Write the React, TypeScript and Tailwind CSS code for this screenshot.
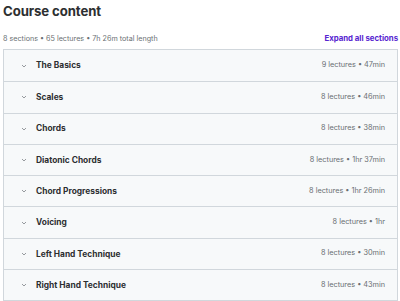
import React from 'react';

const sections = [
  { title: 'The Basics', meta: '9 lectures • 47min' },
  { title: 'Scales', meta: '8 lectures • 46min' },
  { title: 'Chords', meta: '8 lectures • 38min' },
  { title: 'Diatonic Chords', meta: '8 lectures • 1hr 37min' },
  { title: 'Chord Progressions', meta: '8 lectures • 1hr 26min' },
  { title: 'Voicing', meta: '8 lectures • 1hr' },
  { title: 'Left Hand Technique', meta: '8 lectures • 30min' },
  { title: 'Right Hand Technique', meta: '8 lectures • 43min' },
];

function Chevron() {
  return (
    <svg width="6" height="4" viewBox="0 0 6 4" className="shrink-0">
      <path d="M1 1l2 2 2-2" fill="none" stroke="#8a8f93" strokeWidth="0.9" />
    </svg>
  );
}

export default function App() {
  return (
    <div className="w-[400px] h-[301px] overflow-hidden bg-white font-['Inter',sans-serif] text-[#2d2f31]">
      <div className="pl-[3px] pr-[2px]">
        <h2 className="font-bold text-[13.2px] leading-[20px] pt-[1px] tracking-[-0.1px]">Course content</h2>

        <div className="flex items-center justify-between mt-[10px] h-[16px]">
          <span className="text-[7.2px] text-[#6a6f73]">8 sections • 65 lectures • 7h 26m total length</span>
          <span className="text-[7.8px] font-bold text-[#5624d0]">Expand all sections</span>
        </div>

        {/* Sections */}
        <div className="mt-[2px] border border-[#d1d7dc] bg-[#f7f9fa]">
          {sections.map((s, i) => (
            <div
              key={s.title}
              className={`flex items-center h-[31.3px] pl-[17px] pr-[12px] ${i > 0 ? 'border-t border-[#d1d7dc]' : ''}`}
            >
              <Chevron />
              <span className="ml-[9px] text-[8.4px] font-bold">{s.title}</span>
              <span className="ml-auto text-[7.3px] text-[#6a6f73]">{s.meta}</span>
            </div>
          ))}
        </div>
      </div>
    </div>
  );
}
